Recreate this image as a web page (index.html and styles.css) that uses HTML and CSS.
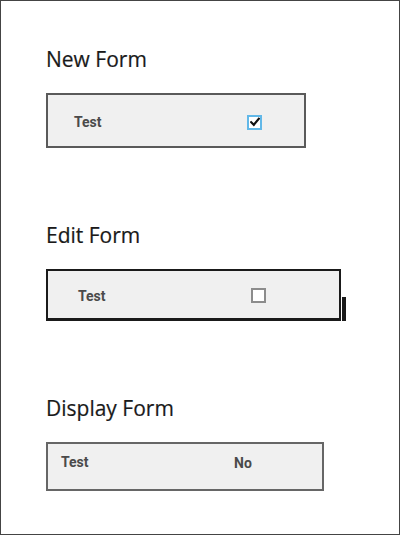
FILE: index.html
```html
<!DOCTYPE html>
<html>
<head>
<meta charset="utf-8">
<link rel="stylesheet" href="styles.css">
</head>
<body>
<div class="frame">
  <section class="form form-new">
    <h2 class="form-title">New Form</h2>
    <div class="field field-new">
      <span class="field-label">Test</span>
      <span class="check check-on">
        <svg width="10" height="10" viewBox="0 0 10 10"><path d="M1.2 5.2 L3.8 7.8 L8.8 1.8" fill="none" stroke="#111" stroke-width="2.2" stroke-linecap="square"/></svg>
      </span>
    </div>
  </section>
  <section class="form form-edit">
    <h2 class="form-title">Edit Form</h2>
    <div class="field field-edit">
      <span class="field-label">Test</span>
      <span class="check check-off"></span>
    </div>
  </section>
  <section class="form form-display">
    <h2 class="form-title">Display Form</h2>
    <div class="field field-display">
      <span class="field-label">Test</span>
      <span class="field-value">No</span>
    </div>
  </section>
</div>
</body>
</html>
```
FILE: styles.css
```css
html, body {
  margin: 0;
  padding: 0;
  background: #fff;
}
.frame {
  box-sizing: border-box;
  width: 400px;
  height: 535px;
  border: 1px solid #444;
  padding: 44px 0 0 45px;
  font-family: "Open Sans", "Noto Sans", sans-serif;
}
.form-title {
  margin: 0;
  font-size: 21px;
  font-weight: 400;
  line-height: 28px;
  color: #1a1a1a;
  -webkit-text-stroke: 0.2px #1a1a1a;
}
.form-edit { margin-top: 73px; }
.form-display { margin-top: 73px; }
.field {
  box-sizing: border-box;
  display: grid;
  grid-template-columns: 173px auto;
  align-items: center;
  background: #f0f0f0;
  margin-top: 20px;
  font-family: Roboto, "Liberation Sans", sans-serif;
  font-weight: 700;
  font-size: 14px;
  color: #4a4a4a;
}
.field-new {
  width: 260px;
  height: 55px;
  border: 2px solid #5a5a5a;
  padding: 3px 0 0 26px;
}
.field-edit {
  position: relative;
  width: 295px;
  height: 52px;
  border: 2px solid #1a1a1a;
  border-bottom-width: 3px;
  padding: 2px 0 0 30px;
  margin-top: 20px;
}
.field-edit::after {
  content: "";
  position: absolute;
  right: -7px;
  bottom: -3px;
  width: 4px;
  height: 24px;
  background: #1a1a1a;
}
.field-display {
  width: 278px;
  height: 49px;
  border: 2px solid #666;
  padding: 0 0 9px 13px;
}
.field-value {
  padding-top: 2px;
}
.check {
  box-sizing: border-box;
  display: flex;
  align-items: center;
  justify-content: center;
  background: #fff;
}
.check-on {
  width: 15px;
  height: 15px;
  border: 2px solid #62b8e8;
}
.check-off {
  width: 15px;
  height: 15px;
  border: 2px solid #8c8c8c;
}
```
